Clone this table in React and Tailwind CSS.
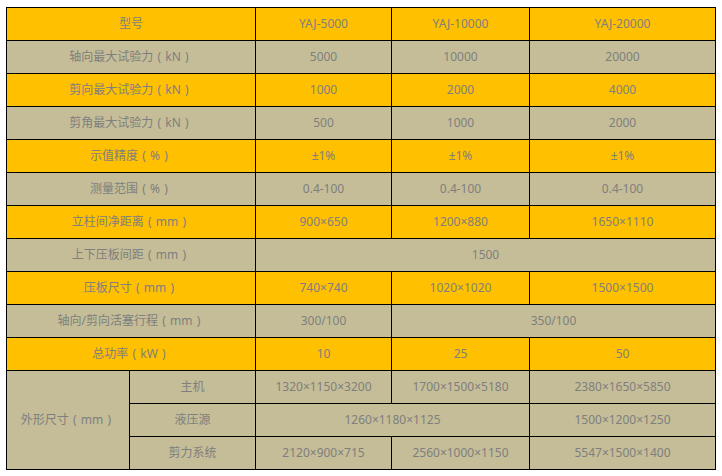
const Y = 'bg-[#ffc000]';
const K = 'bg-[#c4bd97]';

function Cell({ bg, className = '', children }) {
  return (
    <div className={`${bg} ${className} flex items-center justify-center whitespace-nowrap`}>
      {children}
    </div>
  );
}

// YaHei-style full width brackets: glyph centred in a 1em box
function Label({ name, unit }) {
  if (!unit) return <span>{name}</span>;
  return (
    <span>
      {name}
      <span className="inline-block w-[12px] text-center">(</span>
      {unit}
      <span className="inline-block w-[12px] text-center">)</span>
    </span>
  );
}

const rows = [
  { bg: Y, name: '型号', vals: ['YAJ-5000', 'YAJ-10000', 'YAJ-20000'] },
  { bg: K, name: '轴向最大试验力', unit: 'kN', vals: ['5000', '10000', '20000'] },
  { bg: Y, name: '剪向最大试验力', unit: 'kN', vals: ['1000', '2000', '4000'] },
  { bg: K, name: '剪角最大试验力', unit: 'kN', vals: ['500', '1000', '2000'] },
  { bg: Y, name: '示值精度', unit: '%', vals: ['±1%', '±1%', '±1%'] },
  { bg: K, name: '测量范围', unit: '%', vals: ['0.4-100', '0.4-100', '0.4-100'] },
  { bg: Y, name: '立柱间净距离', unit: 'mm', vals: ['900×650', '1200×880', '1650×1110'] },
];

export default function App() {
  return (
    <div className="bg-white w-[722px] h-[476px] pl-[6px] pt-[7px] text-[12px] text-[#7f7f7f] font-['Noto_Sans','Noto_Sans_CJK_SC',sans-serif]">
      <div className="grid grid-cols-[122px_125px_135px_137px_185px] auto-rows-[32px] gap-px p-px bg-black w-[710px]">
        {rows.map((r) => (
          <div key={r.name + r.bg} className="contents">
            <Cell bg={r.bg} className="col-span-2">
              <Label name={r.name} unit={r.unit} />
            </Cell>
            {r.vals.map((v, i) => (
              <Cell key={i} bg={r.bg}>{v}</Cell>
            ))}
          </div>
        ))}

        <Cell bg={K} className="col-span-2"><Label name="上下压板间距" unit="mm" /></Cell>
        <Cell bg={K} className="col-span-3">1500</Cell>

        <Cell bg={Y} className="col-span-2"><Label name="压板尺寸" unit="mm" /></Cell>
        <Cell bg={Y}>740×740</Cell>
        <Cell bg={Y}>1020×1020</Cell>
        <Cell bg={Y}>1500×1500</Cell>

        <Cell bg={K} className="col-span-2"><Label name="轴向/剪向活塞行程" unit="mm" /></Cell>
        <Cell bg={K}>300/100</Cell>
        <Cell bg={K} className="col-span-2">350/100</Cell>

        <Cell bg={Y} className="col-span-2"><Label name="总功率" unit="kW" /></Cell>
        <Cell bg={Y}>10</Cell>
        <Cell bg={Y}>25</Cell>
        <Cell bg={Y}>50</Cell>

        <Cell bg={K} className="row-span-3"><Label name="外形尺寸" unit="mm" /></Cell>
        <Cell bg={K}>主机</Cell>
        <Cell bg={K}>1320×1150×3200</Cell>
        <Cell bg={K}>1700×1500×5180</Cell>
        <Cell bg={K}>2380×1650×5850</Cell>

        <Cell bg={K}>液压源</Cell>
        <Cell bg={K} className="col-span-2">1260×1180×1125</Cell>
        <Cell bg={K}>1500×1200×1250</Cell>

        <Cell bg={K}>剪力系统</Cell>
        <Cell bg={K}>2120×900×715</Cell>
        <Cell bg={K}>2560×1000×1150</Cell>
        <Cell bg={K}>5547×1500×1400</Cell>
      </div>
    </div>
  );
}
